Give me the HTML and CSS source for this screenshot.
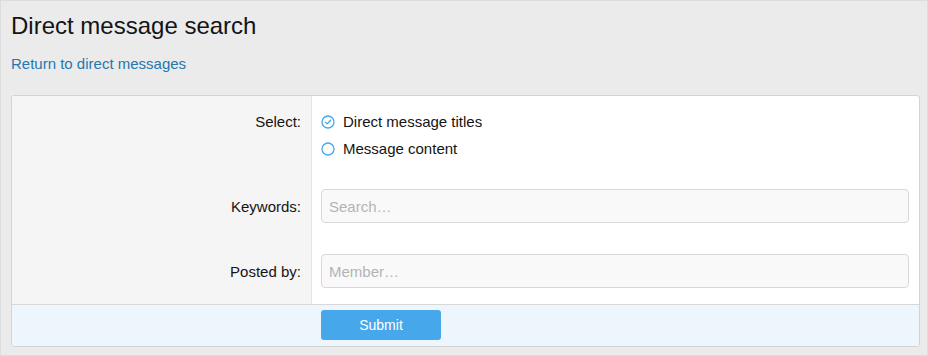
FILE: index.html
```html
<!DOCTYPE html>
<html lang="en">

<head>
    <meta charset="UTF-8">
    <meta name="viewport" content="width=device-width, initial-scale=1.0">
    <title>Direct message search</title>
    <link rel="stylesheet" href="styles.css">
</head>

<body>
    <h1>Direct message search</h1>
    <a class="back-link" href="#">Return to direct messages</a>

    <form class="block">
        <div class="form-row row-select">
            <div class="row-label">Select:</div>
            <div class="row-input">
                <label class="choice">
                    <svg width="14" height="14" viewBox="0 0 14 14">
                        <circle cx="7" cy="7" r="6" fill="none" stroke="#47a7eb" stroke-width="1.3" />
                        <path d="M4.4 7.1 L6.2 8.9 L9.6 5.3" fill="none" stroke="#47a7eb" stroke-width="1.3" stroke-linecap="round" stroke-linejoin="round" />
                    </svg>
                    Direct message titles
                </label>
                <label class="choice">
                    <svg width="14" height="14" viewBox="0 0 14 14">
                        <circle cx="7" cy="7" r="6" fill="none" stroke="#47a7eb" stroke-width="1.3" />
                    </svg>
                    Message content
                </label>
            </div>
        </div>

        <div class="form-row row-keywords">
            <div class="row-label">Keywords:</div>
            <div class="row-input">
                <input type="text" placeholder="Search…">
            </div>
        </div>

        <div class="form-row row-member">
            <div class="row-label">Posted by:</div>
            <div class="row-input">
                <input type="text" placeholder="Member…">
            </div>
        </div>

        <div class="form-footer">
            <button type="submit">Submit</button>
        </div>
    </form>
</body>

</html>
```

FILE: styles.css
```css
html {
    height: 100%;
}

body {
    font-family: 'Liberation Sans', Arial, sans-serif;
    background: #ebebeb;
    color: #141414;
    margin: 0;
    height: 356px;
    box-sizing: border-box;
    border: 1px solid #dcdcdc;
    padding: 10px 7px 0 10px;
}

h1 {
    font-size: 24px;
    font-weight: normal;
    line-height: 29px;
    margin: 0 0 15px;
}

.back-link {
    display: block;
    font-size: 15px;
    line-height: 18px;
    color: #2577b1;
    text-decoration: none;
    margin-bottom: 22px;
}

.block {
    background: white;
    border: 1px solid #d3d3d3;
    border-radius: 3px;
    overflow: hidden;
}

.form-row {
    display: grid;
    grid-template-columns: 300px 1fr;
}

.row-label {
    background: #f5f5f5;
    border-right: 1px solid #e4e4e4;
    text-align: right;
    font-size: 15px;
    padding-right: 10px;
}

.row-input {
    padding: 0 10px 0 9px;
}

.row-select .row-label,
.row-select .row-input {
    padding-top: 12px;
    padding-bottom: 13px;
    line-height: 27px;
}

.row-keywords .row-label,
.row-keywords .row-input {
    padding-top: 14px;
    padding-bottom: 16px;
    line-height: 34px;
}

.row-member .row-label,
.row-member .row-input {
    padding-top: 15px;
    padding-bottom: 16px;
    line-height: 34px;
}

.row-keywords .row-label,
.row-member .row-label {
    padding-top: 15px;
}

.row-keywords .row-label {
    padding-bottom: 15px;
}

.row-member .row-label {
    padding-top: 16px;
    padding-bottom: 15px;
}

.choice {
    display: flex;
    align-items: center;
    gap: 8px;
    font-size: 15px;
}

input {
    display: block;
    width: 100%;
    height: 34px;
    box-sizing: border-box;
    border: 1px solid #d8d8d8;
    border-radius: 4px;
    background: #f9f9f9;
    padding: 0 7px;
    font-family: inherit;
    font-size: 15px;
}

input::placeholder {
    color: #b4b4b4;
}

.form-footer {
    background: #edf6fd;
    border-top: 1px solid #d8d8d8;
    padding: 5px 0 6px 309px;
}

button {
    display: block;
    width: 120px;
    height: 30px;
    background: #47a7eb;
    color: white;
    border: none;
    border-radius: 3px;
    font-family: inherit;
    font-size: 14px;
    cursor: pointer;
}
```
